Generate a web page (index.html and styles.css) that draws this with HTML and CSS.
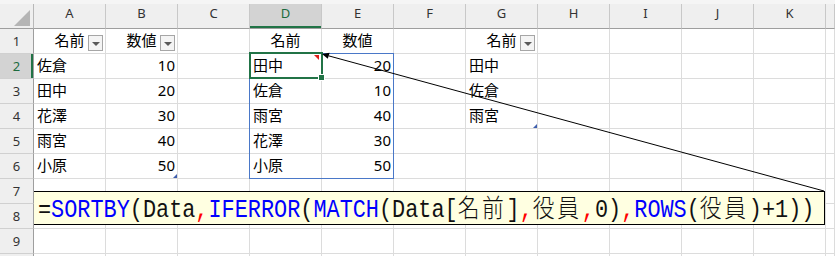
FILE: index.html
```html
<!DOCTYPE html>
<html lang="ja">
<head>
<meta charset="utf-8">
<title>SORTBY</title>
<link rel="stylesheet" href="styles.css">
</head>
<body>
<div class="sheet">
  <div class="strip"></div>

  <div class="corner"><span class="tri"></span></div>
  <div class="ch">A</div><div class="ch">B</div><div class="ch">C</div><div class="ch sel">D</div><div class="ch">E</div><div class="ch">F</div><div class="ch">G</div><div class="ch">H</div><div class="ch">I</div><div class="ch">J</div><div class="ch">K</div><div class="ch"></div>

  <div class="rh">1</div>
  <div class="c th">名前<span class="dd"></span></div>
  <div class="c th">数値<span class="dd"></span></div>
  <div class="c"></div>
  <div class="c th">名前</div>
  <div class="c th">数値</div>
  <div class="c"></div>
  <div class="c th">名前<span class="dd"></span></div>
  <div class="c"></div><div class="c"></div><div class="c"></div><div class="c"></div><div class="c"></div>

  <div class="rh sel">2</div>
  <div class="c">佐倉</div>
  <div class="c num">10</div>
  <div class="c"></div>
  <div class="c">田中<span class="note"></span></div>
  <div class="c num">20</div>
  <div class="c"></div>
  <div class="c">田中</div>
  <div class="c"></div><div class="c"></div><div class="c"></div><div class="c"></div><div class="c"></div>

  <div class="rh">3</div>
  <div class="c">田中</div>
  <div class="c num">20</div>
  <div class="c"></div>
  <div class="c">佐倉</div>
  <div class="c num">10</div>
  <div class="c"></div>
  <div class="c">佐倉</div>
  <div class="c"></div><div class="c"></div><div class="c"></div><div class="c"></div><div class="c"></div>

  <div class="rh">4</div>
  <div class="c">花澤</div>
  <div class="c num">30</div>
  <div class="c"></div>
  <div class="c">雨宮</div>
  <div class="c num">40</div>
  <div class="c"></div>
  <div class="c">雨宮<span class="tmark"></span></div>
  <div class="c"></div><div class="c"></div><div class="c"></div><div class="c"></div><div class="c"></div>

  <div class="rh">5</div>
  <div class="c">雨宮</div>
  <div class="c num">40</div>
  <div class="c"></div>
  <div class="c">花澤</div>
  <div class="c num">30</div>
  <div class="c"></div>
  <div class="c"></div>
  <div class="c"></div><div class="c"></div><div class="c"></div><div class="c"></div><div class="c"></div>

  <div class="rh">6</div>
  <div class="c">小原</div>
  <div class="c num">50<span class="tmark"></span></div>
  <div class="c"></div>
  <div class="c">小原</div>
  <div class="c num">50</div>
  <div class="c"></div>
  <div class="c"></div>
  <div class="c"></div><div class="c"></div><div class="c"></div><div class="c"></div><div class="c"></div>

  <div class="rh">7</div>
  <div class="c"></div><div class="c"></div><div class="c"></div><div class="c"></div><div class="c"></div><div class="c"></div><div class="c"></div><div class="c"></div><div class="c"></div><div class="c"></div><div class="c"></div><div class="c"></div>

  <div class="rh">8</div>
  <div class="c"></div><div class="c"></div><div class="c"></div><div class="c"></div><div class="c"></div><div class="c"></div><div class="c"></div><div class="c"></div><div class="c"></div><div class="c"></div><div class="c"></div><div class="c"></div>

  <div class="rh">9</div>
  <div class="c"></div><div class="c"></div><div class="c"></div><div class="c"></div><div class="c"></div><div class="c"></div><div class="c"></div><div class="c"></div><div class="c"></div><div class="c"></div><div class="c"></div><div class="c"></div>

  <div class="rh tail"></div>
  <div class="c tail"></div><div class="c tail"></div><div class="c tail"></div><div class="c tail"></div><div class="c tail"></div><div class="c tail"></div><div class="c tail"></div><div class="c tail"></div><div class="c tail"></div><div class="c tail"></div><div class="c tail"></div><div class="c tail"></div>

  <div class="spill"></div>
  <div class="selbox"><span class="handle"></span></div>

  <div class="callout"><span class="ftext">=<span class="fn">SORTBY</span>(Data<span class="cm">,</span><span class="fn">IFERROR</span>(<span class="fn">MATCH</span>(Data[<span class="jp">名前</span>]<span class="cm">,</span><span class="jp">役員</span><span class="cm">,</span>0)<span class="cm">,</span><span class="fn">ROWS</span>(<span class="jp">役員</span>)+1))</span></div>

  <svg class="arrow" width="835" height="256" viewBox="0 0 835 256">
    <line x1="824" y1="191" x2="328.5" y2="55.8" stroke="#000" stroke-width="1"/>
    <polygon points="322,54 329.6,52.8 327.8,58.8" fill="#000"/>
  </svg>
</div>
</body>
</html>
```

FILE: styles.css
```css
html, body {
  margin: 0;
  padding: 0;
  overflow: hidden;
  background: #ffffff;
}

.sheet {
  position: relative;
  display: grid;
  grid-template-columns: 34px repeat(11, 72px) 9px;
  grid-template-rows: 4px repeat(10, 25px) 2px;
  font-family: "Noto Sans", "Noto Sans CJK JP", sans-serif;
  width: 835px;
  height: 256px;
  overflow: hidden;
}

.strip {
  grid-column: 1 / -1;
  background: #f5f5f5;
}

.corner,
.ch,
.rh {
  background: #efefef;
  box-sizing: border-box;
  font-size: 13px;
  color: #333333;
  display: flex;
  align-items: center;
  justify-content: center;
  line-height: 1;
}

.corner {
  position: relative;
  border-right: 1px solid #b8b8b8;
  border-bottom: 1px solid #9e9e9e;
}

.tri {
  position: absolute;
  left: 14px;
  top: 6px;
  width: 16px;
  height: 16px;
  background: #b5b5b5;
  clip-path: polygon(100% 0, 100% 100%, 0 100%);
}

.ch {
  border-right: 1px solid #c8c8c8;
  border-bottom: 1px solid #9e9e9e;
  padding-bottom: 5px;
}

.ch.sel {
  background: #d3d3d3;
  color: #1d6b3e;
  box-shadow: inset 0 -2px 0 #217346;
}

.rh {
  border-right: 1px solid #9e9e9e;
  border-bottom: 1px solid #d0d0d0;
}

.rh.sel {
  background: #d3d3d3;
  color: #1d6b3e;
  box-shadow: inset -2px 0 0 #217346;
}

.c {
  position: relative;
  box-sizing: border-box;
  border-right: 1px solid #dcdcdc;
  border-bottom: 1px solid #dcdcdc;
  font-size: 15px;
  color: #000000;
  display: flex;
  align-items: center;
  padding: 0 3px 1px 3px;
  white-space: nowrap;
  line-height: 1;
}

.tail {
  border-bottom: none;
}

.c.num {
  justify-content: flex-end;
  padding-right: 2px;
}

.c.th {
  justify-content: center;
}

.dd {
  position: absolute;
  right: 2px;
  bottom: 2px;
  width: 15px;
  height: 16px;
  box-sizing: border-box;
  border: 1px solid #a6a6a6;
  background: #f4f4f4;
  display: flex;
  align-items: center;
  justify-content: center;
}

.dd::after {
  content: "";
  width: 0;
  height: 0;
  border-left: 4px solid transparent;
  border-right: 4px solid transparent;
  border-top: 4px solid #5a5a5a;
  margin-top: 1px;
}

.note {
  position: absolute;
  right: 2px;
  top: 1px;
  width: 0;
  height: 0;
  border-top: 5px solid #e0201b;
  border-left: 5px solid transparent;
}

.tmark {
  position: absolute;
  right: 0;
  bottom: 0;
  width: 4px;
  height: 4px;
  background: #3f5fae;
  clip-path: polygon(100% 0, 100% 100%, 0 100%);
}

.spill {
  position: absolute;
  left: 249px;
  top: 53px;
  width: 145px;
  height: 126px;
  box-sizing: border-box;
  border: 1px solid #4a78c8;
  pointer-events: none;
}

.selbox {
  position: absolute;
  left: 249px;
  top: 52px;
  width: 74px;
  height: 27px;
  box-sizing: border-box;
  border: 2px solid #217346;
}

.handle {
  position: absolute;
  right: -4px;
  bottom: -4px;
  width: 5px;
  height: 5px;
  background: #217346;
  border: 1px solid #ffffff;
}

.callout {
  position: absolute;
  left: 34px;
  top: 191px;
  width: 791px;
  height: 34px;
  box-sizing: border-box;
  border: 1px solid #000000;
  border-left: none;
  background: #ffffe1;
  display: flex;
  align-items: center;
  padding-left: 4px;
}

.ftext {
  display: inline-block;
  font-family: "Liberation Mono", "Noto Sans CJK JP", monospace;
  font-size: 25px;
  line-height: 1;
  color: #111111;
  white-space: nowrap;
  transform: scaleX(0.874);
  transform-origin: left center;
}

.fn {
  color: #0000ff;
}

.cm {
  color: #ff0000;
}

.jp {
  font-family: "Noto Sans CJK JP", sans-serif;
  font-weight: 300;
  letter-spacing: 3px;
}

.arrow {
  position: absolute;
  left: 0;
  top: 0;
  pointer-events: none;
}
```
